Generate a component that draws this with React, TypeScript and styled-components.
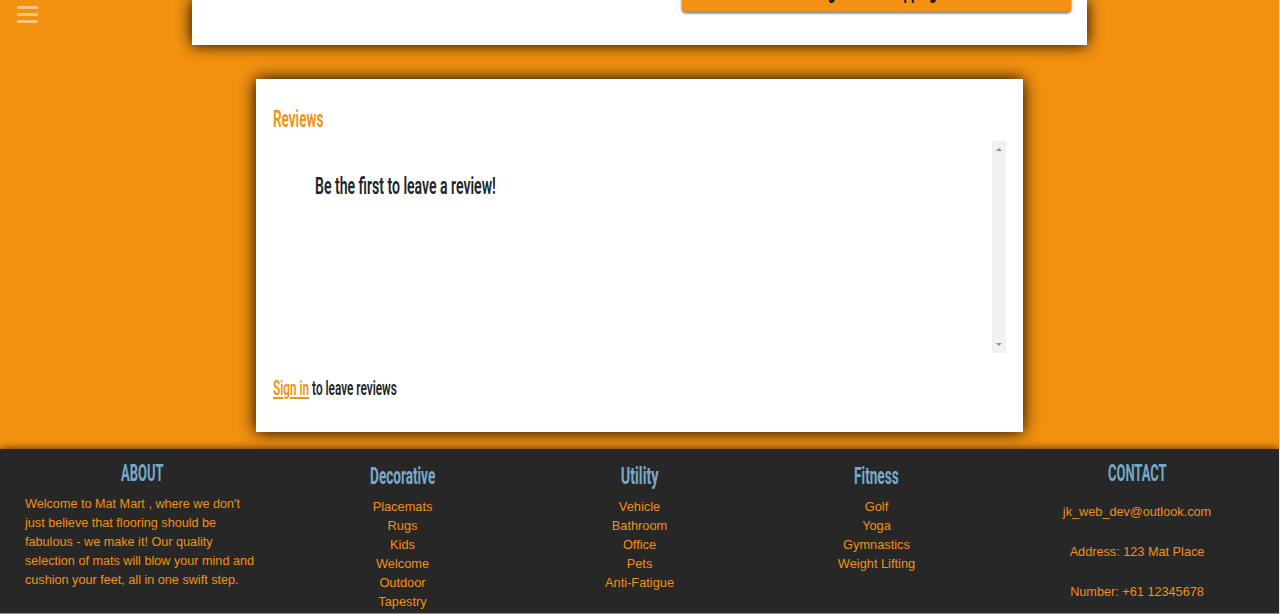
import React from "react";
import styled, { createGlobalStyle } from "styled-components";

const orange = "#f39110";

const GlobalStyle = createGlobalStyle`
  *, *::before, *::after { box-sizing: border-box; }
  html, body { margin: 0; padding: 0; overflow: hidden; }
  h2, h3, p, ul { margin: 0; padding: 0; font-weight: inherit; }
`;

const Page = styled.div`
  position: relative;
  display: flex;
  flex-direction: column;
  align-items: center;
  width: 1280px;
  height: 614px;
  overflow: hidden;
  border-right: 1px solid #fbe3c0;
  border-bottom: 1px solid #8a8888;
  background: ${orange};
  color: #212529;
  font-family: "Liberation Sans", Arial, sans-serif;
  font-size: 12.8px;
`;

const MenuButton = styled.button`
  position: absolute;
  left: 17px;
  top: 6px;
  display: flex;
  flex-direction: column;
  gap: 4px;
  padding: 0;
  border: 0;
  background: none;
`;

const MenuBar = styled.span`
  width: 21px;
  height: 3px;
  border-radius: 1px;
  background: #fbc581;
`;

const ProductCard = styled.section`
  display: flex;
  justify-content: flex-end;
  align-items: flex-end;
  flex: none;
  width: 895px;
  height: 45px;
  padding: 0 16px 33px 0;
  background: #fff;
  box-shadow: 0 0 16px #000;
`;

const CartButton = styled.button`
  display: flex;
  justify-content: center;
  align-items: flex-end;
  flex: none;
  width: 389px;
  height: 48px;
  padding: 0 0 8px;
  border: 0;
  border-radius: 4px;
  background: ${orange};
  box-shadow: 0 1px 3px rgba(0, 0, 0, 0.7);
  color: #111;
`;

const ReviewCard = styled.section`
  flex: none;
  width: 767px;
  height: 353px;
  margin-top: 34px;
  padding: 26px 17px 0;
  background: #fff;
  box-shadow: 0 0 16px #000;
`;

const Condensed = styled.span<{ $scale: number; $size?: number; $origin?: string; $weight?: number }>`
  display: inline-block;
  transform: scaleX(${(p) => p.$scale});
  transform-origin: ${(p) => p.$origin ?? "left"} center;
  font-family: Roboto, sans-serif;
  font-size: ${(p) => p.$size ?? 24}px;
  font-weight: ${(p) => p.$weight ?? 600};
  line-height: 28px;
  white-space: nowrap;
`;

const ReviewTitle = styled.h2`
  height: 28px;
  color: ${orange};
`;

const ReviewList = styled.div`
  display: flex;
  justify-content: space-between;
  height: 212px;
  margin-top: 8px;
`;

const EmptyMessage = styled.h3`
  padding: 31px 0 0 42px;
`;

const ScrollTrack = styled.div`
  display: flex;
  flex-direction: column;
  justify-content: space-between;
  align-items: center;
  width: 14px;
  padding: 7px 0 7px;
  background: #f1f1f1;
`;

const Arrow = styled.span<{ $down?: boolean }>`
  border: 3px solid transparent;
  border-top-width: ${(p) => (p.$down ? 3 : 0)}px;
  border-bottom-width: ${(p) => (p.$down ? 0 : 3)}px;
  border-${(p) => (p.$down ? "top" : "bottom")}-color: #929292;
`;

const SignInLine = styled.p`
  margin-top: 21px;
`;

const SignInLink = styled.a`
  color: ${orange};
  text-decoration: underline;
  text-decoration-thickness: 2px;
  text-underline-offset: 2px;
`;

const Footer = styled.footer`
  display: flex;
  flex: none;
  width: 100%;
  height: 164px;
  margin-top: 17px;
  padding: 10px 0 0 25px;
  background: #272727;
  box-shadow: 0 0 8px rgba(0, 0, 0, 0.75);
  color: ${orange};
  line-height: 19.1px;
`;

const Column = styled.div<{ $width: number; $drop?: number }>`
  display: flex;
  flex-direction: column;
  align-items: center;
  flex: none;
  width: ${(p) => p.$width}px;
  padding-top: ${(p) => p.$drop ?? 0}px;
`;

const FooterTitle = styled.h3`
  display: flex;
  justify-content: center;
  width: 100%;
  height: 28px;
  color: #76aacb;
`;

const About = styled.p`
  width: 234px;
  padding-top: 8px;
  font-size: 12.65px;
  white-space: nowrap;
`;

const Links = styled.ul`
  padding-top: 7px;
  list-style: none;
  text-align: center;
`;

const Contact = styled.div`
  display: flex;
  flex-direction: column;
  align-items: center;
  gap: 21px;
  padding-top: 16px;
  font-size: 12.7px;
`;

const categories = [
  { title: "Decorative", scale: 0.565, items: ["Placemats", "Rugs", "Kids", "Welcome", "Outdoor", "Tapestry"] },
  { title: "Utility", scale: 0.6, items: ["Vehicle", "Bathroom", "Office", "Pets", "Anti-Fatigue"] },
  { title: "Fitness", scale: 0.565, items: ["Golf", "Yoga", "Gymnastics", "Weight Lifting"] },
];

export default function App() {
  return (
    <>
      <GlobalStyle />
      <Page>
        <ProductCard>
          <CartButton>
            <Condensed $scale={0.55} $origin="center" $weight={700}>Sign in for Shopping</Condensed>
          </CartButton>
        </ProductCard>
        <ReviewCard>
          <ReviewTitle><Condensed $scale={0.565}>Reviews</Condensed></ReviewTitle>
          <ReviewList>
            <EmptyMessage><Condensed $scale={0.585}>Be the first to leave a review!</Condensed></EmptyMessage>
            <ScrollTrack>
              <Arrow />
              <Arrow $down />
            </ScrollTrack>
          </ReviewList>
          <SignInLine>
            <Condensed $scale={0.59} $size={20}>
              <SignInLink>Sign in</SignInLink> to leave reviews
            </Condensed>
          </SignInLine>
        </ReviewCard>
        <Footer>
          <Column $width={234}>
            <FooterTitle><Condensed $scale={0.54} $origin="center" $weight={700}>ABOUT</Condensed></FooterTitle>
            <About>
              Welcome to Mat Mart , where we don't<br />
              just believe that flooring should be<br />
              fabulous - we make it! Our quality<br />
              selection of mats will blow your mind and<br />
              cushion your feet, all in one swift step.
            </About>
          </Column>
          <Column $width={25} />
          {categories.map((c) => (
            <Column key={c.title} $width={237} $drop={3}>
              <FooterTitle><Condensed $scale={c.scale} $origin="center" $weight={700}>{c.title}</Condensed></FooterTitle>
              <Links>{c.items.map((i) => <li key={i}>{i}</li>)}</Links>
            </Column>
          ))}
          <Column $width={284}>
            <FooterTitle><Condensed $scale={0.54} $origin="center" $weight={700}>CONTACT</Condensed></FooterTitle>
            <Contact>
              <p>jk_web_dev@outlook.com</p>
              <p>Address: 123 Mat Place</p>
              <p>Number: +61 12345678</p>
            </Contact>
          </Column>
        </Footer>
        <MenuButton aria-label="Menu">
          <MenuBar />
          <MenuBar />
          <MenuBar />
        </MenuButton>
      </Page>
    </>
  );
}
